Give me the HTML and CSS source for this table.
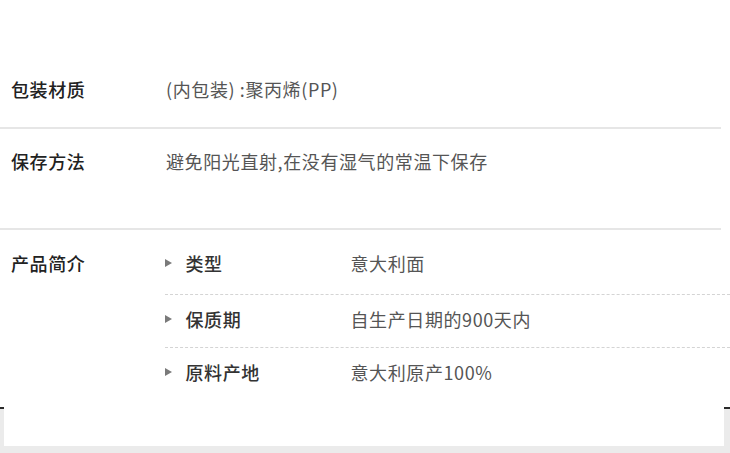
FILE: index.html
```html
<!DOCTYPE html>
<html lang="zh-CN">
<head>
<meta charset="utf-8">
<title>商品信息</title>
<link rel="stylesheet" href="styles.css">
</head>
<body>
<main class="spec">
  <div class="row row-pack">
    <div class="label">包装材质</div>
    <div class="value">(内包装) :聚丙烯(PP)</div>
  </div>
  <div class="row row-store">
    <div class="label">保存方法</div>
    <div class="value">避免阳光直射,在没有湿气的常温下保存</div>
  </div>
  <div class="row row-intro">
    <div class="label">产品简介</div>
    <ul class="sub">
      <li class="sub-item"><span class="tri"></span><span class="sub-label">类型</span><span class="sub-value">意大利面</span></li>
      <li class="sub-item"><span class="tri"></span><span class="sub-label">保质期</span><span class="sub-value">自生产日期的900天内</span></li>
      <li class="sub-item"><span class="tri"></span><span class="sub-label">原料产地</span><span class="sub-value">意大利原产100%</span></li>
    </ul>
  </div>
  <div class="footer"><div class="footer-box"></div></div>
</main>
</body>
</html>
```

FILE: styles.css
```css
html, body {
  margin: 0;
  padding: 0;
  background: #fff;
}
body {
  font-family: "Noto Sans CJK SC", "Noto Sans", sans-serif;
  font-size: 18px;
  line-height: 22px;
  letter-spacing: 0.6px;
  color: #555;
  width: 730px;
  height: 453px;
  overflow: hidden;
}
.spec {
  display: flex;
  flex-direction: column;
  padding-top: 56px;
}
.row {
  display: grid;
  grid-template-columns: 166px 1fr;
}
.row-pack, .row-store {
  margin-right: 9px;
  border-bottom: 2px solid #e6e6e6;
}
.row-pack {
  padding: 22px 0 27px;
}
.row-store {
  padding: 21px 0 56px;
}
.label {
  padding-left: 11px;
  color: #222;
  font-weight: 500;
}
.row-intro .label {
  padding-top: 22px;
}
.value {
  color: #555;
}
.sub {
  list-style: none;
  margin: 0;
  padding: 8px 0 0;
  margin-left: -1px;
}
.sub-item {
  display: flex;
  align-items: center;
  padding: 13px 0 17px;
}
.sub-item:first-child {
  padding: 14px 0 20px;
}
.sub-item + .sub-item {
  border-top: 1px dashed #d4d4d4;
}
.tri {
  width: 0;
  height: 0;
  border-left: 7.5px solid #7a7a7a;
  border-top: 4.5px solid transparent;
  border-bottom: 4.5px solid transparent;
  margin-right: 13.5px;
}
.sub-label {
  width: 165px;
  color: #333;
  font-weight: 500;
}
.sub-value {
  color: #555;
}
.footer {
  margin-top: 7px;
  border-top: 2px solid #2a2a2a;
  background: #ebebeb;
  padding: 0 6px 7px 4px;
}
.footer-box {
  margin-top: -2px;
  height: 39px;
  background: #fff;
}
```
